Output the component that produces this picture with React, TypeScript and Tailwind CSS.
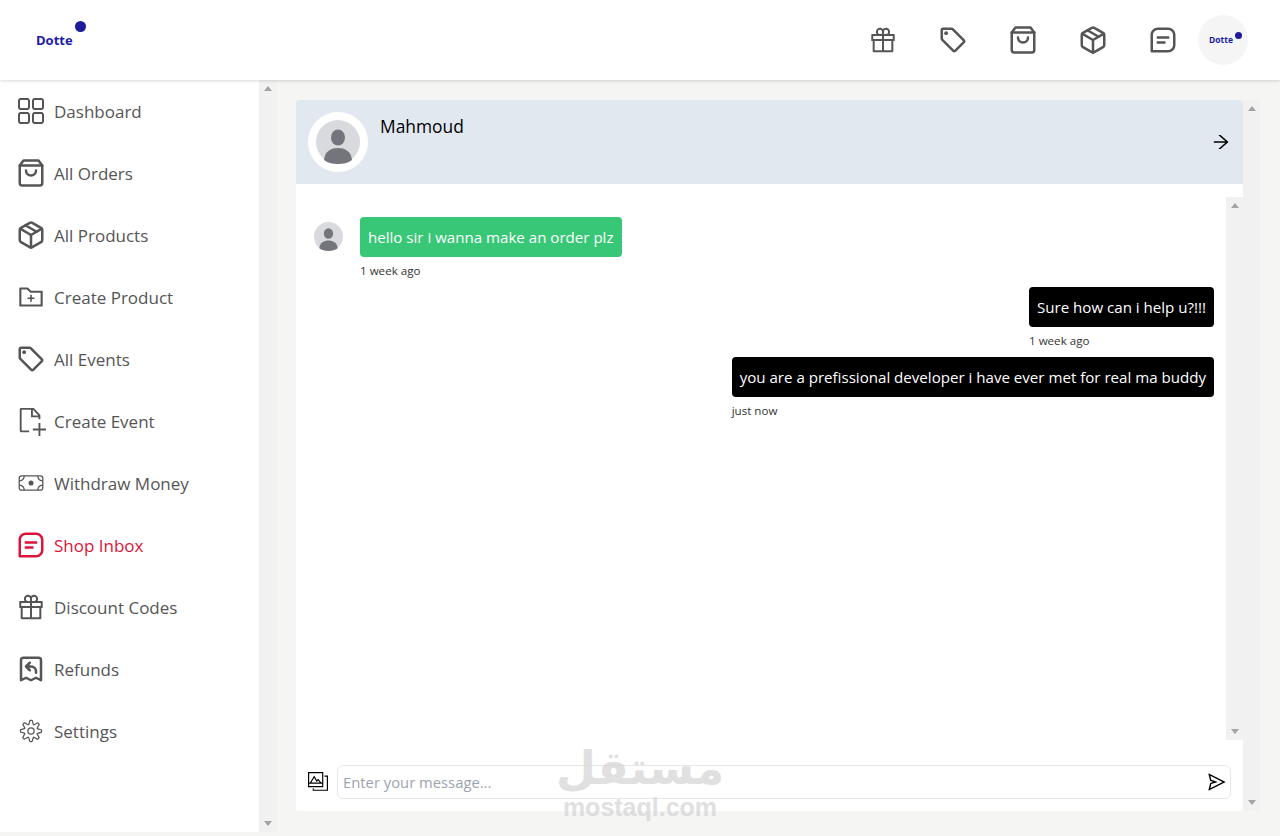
import { AiOutlineArrowRight, AiOutlineFolderAdd, AiOutlineGift, AiOutlineSend } from "react-icons/ai";
import { BiMessageSquareDetail } from "react-icons/bi";
import { CiMoneyBill, CiSettings } from "react-icons/ci";
import { FiPackage, FiShoppingBag } from "react-icons/fi";
import { HiOutlineReceiptRefund } from "react-icons/hi";
import { MdOutlineLocalOffer } from "react-icons/md";
import { RxDashboard } from "react-icons/rx";
import { TfiGallery } from "react-icons/tfi";
import { VscNewFile } from "react-icons/vsc";

const font = "font-['Open_Sans','Noto_Sans',sans-serif]";

const menu = [
  { label: "Dashboard", icon: RxDashboard },
  { label: "All Orders", icon: FiShoppingBag },
  { label: "All Products", icon: FiPackage },
  { label: "Create Product", icon: AiOutlineFolderAdd },
  { label: "All Events", icon: MdOutlineLocalOffer },
  { label: "Create Event", icon: VscNewFile },
  { label: "Withdraw Money", icon: CiMoneyBill },
  { label: "Shop Inbox", icon: BiMessageSquareDetail, active: true },
  { label: "Discount Codes", icon: AiOutlineGift },
  { label: "Refunds", icon: HiOutlineReceiptRefund },
  { label: "Settings", icon: CiSettings },
];

const headerIcons = [AiOutlineGift, MdOutlineLocalOffer, FiShoppingBag, FiPackage, BiMessageSquareDetail];

const Scrollbar = ({ className }: { className: string }) => (
  <div className={`flex flex-col items-center justify-between bg-[#f1f1f1] py-[6px] ${className}`}>
    <div className="h-0 w-0 border-x-[4px] border-b-[5px] border-x-transparent border-b-[#a3a3a3]" />
    <div className="h-0 w-0 border-x-[4px] border-t-[5px] border-x-transparent border-t-[#a3a3a3]" />
  </div>
);

const Avatar = ({ size }: { size: string }) => (
  <svg viewBox="0 0 44 44" className={size}>
    <circle cx="22" cy="22" r="22" fill="#d8dade" />
    <ellipse cx="22" cy="17.5" rx="7" ry="8" fill="#74757c" />
    <path d="M8 40 C9 31 15 28 22 28 C29 28 35 31 36 40 C32 43 27 44 22 44 C17 44 12 43 8 40 Z" fill="#74757c" />
  </svg>
);

const Logo = ({ small }: { small?: boolean }) =>
  small ? (
    <div className="relative text-[8.5px] leading-none font-bold text-[#1c1ca8]">
      Dotte
      <span className="absolute top-[-4px] right-[-9px] h-[7px] w-[7px] rounded-full bg-[#1c1c9c]" />
    </div>
  ) : (
    <div className="relative text-[13px] leading-none font-bold text-[#1c1ca8]">
      Dotte
      <span className="absolute top-[-13px] right-[-13px] h-[11px] w-[11px] rounded-full bg-[#1c1c9c]" />
    </div>
  );

const Message = ({ text, time, mine }: { text: string; time: string; mine?: boolean }) => (
  <div className={`mb-[10px] flex ${mine ? "justify-end" : "justify-start"}`}>
    {!mine && (
      <div className="mt-[5px] mr-[17px]">
        <Avatar size="h-[29px] w-[29px]" />
      </div>
    )}
    <div>
      <div className={`flex h-10 items-center rounded-[4px] px-2 text-[15.1px] whitespace-nowrap text-white ${mine ? "bg-black" : "bg-[#38c776]"}`}>
        {text}
      </div>
      <p className="h-[20px] pt-[6px] text-[11.6px] leading-[16px] text-[#333]">{time}</p>
    </div>
  </div>
);

export default function App() {
  return (
    <div className={`relative flex h-[836px] w-[1280px] flex-col overflow-hidden bg-[#f5f5f3] ${font}`}>
      {/* Header */}
      <header className="relative z-10 flex h-20 items-center justify-between bg-white pr-[32px] pl-[36px] shadow-[0_1px_3px_rgba(0,0,0,0.15)]">
        <Logo />
        <div className="flex items-center">
          {headerIcons.map((Icon, i) => (
            <Icon key={i} size={30} color="#555" className="mr-10" />
          ))}
          <div className="-ml-5 flex h-[50px] w-[50px] items-center justify-center rounded-full bg-[#f5f5f5] pr-[4px]">
            <Logo small />
          </div>
        </div>
      </header>

      <div className="flex min-h-0 flex-1">
        {/* Sidebar */}
        <div className="flex h-[752px]">
          <aside className="w-[259px] bg-white">
            {menu.map(({ label, icon: Icon, active }) => (
              <div key={label} className="flex h-[62px] items-center pl-[16px]">
                <div className="flex w-[30px] justify-center">
                  <Icon size={30} color={active ? "#dc143c" : "#555"} />
                </div>
                <span className={`pt-px pl-2 text-[17px] font-normal ${active ? "text-[#dc143c]" : "text-[#555]"}`}>{label}</span>
              </div>
            ))}
          </aside>
          <Scrollbar className="w-[18px]" />
        </div>

        {/* Main */}
        <main className="flex flex-1 pt-5 pl-[19px]">
          <div className="flex h-[711px] w-[947px] flex-col rounded-[3px] bg-white">
            <div className="flex h-[84px] justify-between rounded-t-[3px] bg-[#e2e8f0] pt-3 pr-3 pl-3">
              <div className="flex">
                <div className="flex h-[60px] w-[60px] items-center justify-center rounded-full bg-white">
                  <Avatar size="h-[44px] w-[44px]" />
                </div>
                <p className="pl-3 text-[17.4px] leading-[28px] font-medium text-black">Mahmoud</p>
              </div>
              <AiOutlineArrowRight size={20} color="#000" className="mt-5" />
            </div>

            <div className="flex h-[556px] pt-[13px]">
              <div className="flex-1 pt-5 pr-3 pl-[18px]">
                <Message text="hello sir i wanna make an order plz" time="1 week ago" />
                <Message text="Sure how can i help u?!!!" time="1 week ago" mine />
                <Message text="you are a prefissional developer i have ever met for real ma buddy" time="just now" mine />
              </div>
              <Scrollbar className="w-[17px]" />
            </div>

            <div className="flex items-center pt-[25px] pr-3 pl-3">
              <TfiGallery size={20} color="#000" className="mr-[9px]" />
              <div className="flex h-[34px] flex-1 items-center justify-between rounded-[6px] border border-[#e5e7eb] pr-[3px] pl-[5px]">
                <span className="text-[14.8px] text-[#9ca3af]">Enter your message...</span>
                <AiOutlineSend size={20} color="#000" />
              </div>
            </div>
          </div>
          <Scrollbar className="h-[711px] w-[17px]" />
        </main>
      </div>

      {/* Watermark */}
      <div className="pointer-events-none absolute top-[742px] left-[562px] flex w-[156px] flex-col items-center text-[#d4d4d4] opacity-70">
        <span className="font-['DejaVu_Sans',sans-serif] text-[46px] leading-[52px] font-bold" dir="rtl">مستقل</span>
        <span className="font-['Liberation_Sans',sans-serif] text-[25px] leading-[26px] font-bold">mostaql.com</span>
      </div>
    </div>
  );
}
